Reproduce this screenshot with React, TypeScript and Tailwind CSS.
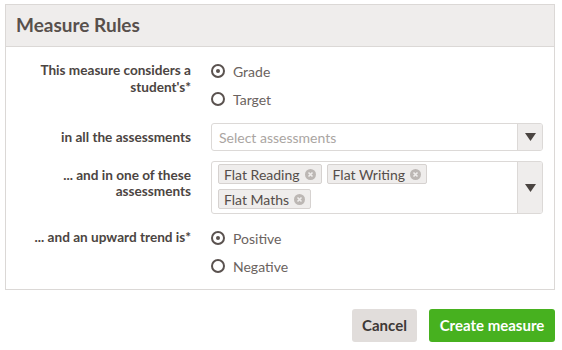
import React from "react";

const font = { fontFamily: "Lato, 'Open Sans', sans-serif" };

function Radio({ checked, label }: { checked?: boolean; label: string }) {
  return (
    <div className="flex h-[28px] items-center">
      <span className="flex h-[14px] w-[14px] items-center justify-center rounded-full border-2 border-[#5a524f] bg-white">
        {checked && <span className="h-[4px] w-[4px] rounded-full bg-[#5a524f]" />}
      </span>
      <span className="ml-[8px] text-[14px] text-[#6b6360]">{label}</span>
    </div>
  );
}

function Arrow({ h }: { h: string }) {
  return (
    <div className={`flex w-[25px] items-center justify-center border-l border-[#dcd9d7] bg-[#efedec] ${h}`}>
      <svg width="11" height="8" viewBox="0 0 11 8">
        <path d="M0 0 H11 L5.5 8 Z" fill="#4a4441" />
      </svg>
    </div>
  );
}

function Tag({ label }: { label: string }) {
  return (
    <span className="flex h-[20px] items-center rounded-[2px] border border-[#d6d2d0] bg-[#efedec] pl-[5px] pr-[5px] text-[14px] text-[#554d4a]">
      {label}
      <svg className="ml-[5px]" width="11" height="11" viewBox="0 0 11 11">
        <circle cx="5.5" cy="5.5" r="5.5" fill="#bcb7b4" />
        <path d="M3.5 3.5 L7.5 7.5 M7.5 3.5 L3.5 7.5" stroke="#efedec" strokeWidth="1.6" />
      </svg>
    </span>
  );
}

export default function App() {
  return (
    <div style={font} className="h-[350px] w-[562px] bg-white pl-[5px] pt-[4px]">
      <div className="w-[550px] border border-[#dbd8d6]">
        <div className="flex h-[42px] items-center border-b border-[#dbd8d6] bg-[#efedec] pl-[10px]">
          <span className="text-[19px] font-bold text-[#58504c]">Measure Rules</span>
        </div>
        <div className="flex flex-col gap-[10px] pb-[9px] pt-[10px] text-[13.6px]">
          <div className="flex">
            <div className="w-[185px] pt-[5px] text-right font-bold leading-[17px] text-[#4c4542]">
              This measure considers a<br />student's*
            </div>
            <div className="ml-[20px] flex flex-col">
              <Radio checked label="Grade" />
              <Radio label="Target" />
            </div>
          </div>
          <div className="flex items-center">
            <div className="w-[185px] text-right font-bold leading-[17px] text-[#4c4542]">in all the assessments</div>
            <div className="ml-[20px] mr-[11px] flex h-[28px] flex-1 overflow-hidden rounded-[3px] border border-[#dcd9d7]">
              <div className="flex flex-1 items-center pl-[7px] text-[14px] text-[#aaa5a2]">Select assessments</div>
              <Arrow h="h-full" />
            </div>
          </div>
          <div className="flex">
            <div className="w-[185px] pt-[6px] text-right font-bold leading-[16px] text-[#4c4542]">
              ... and in one of these<br />assessments
            </div>
            <div className="ml-[20px] mr-[11px] flex h-[53px] flex-1 overflow-hidden rounded-[3px] border border-[#dcd9d7]">
              <div className="flex flex-1 flex-wrap content-start gap-[5px] pl-[6px] pt-[2px]">
                <Tag label="Flat Reading" />
                <Tag label="Flat Writing" />
                <Tag label="Flat Maths" />
              </div>
              <Arrow h="h-full" />
            </div>
          </div>
          <div className="flex">
            <div className="w-[185px] pt-[5px] text-right font-bold leading-[17px] text-[#4c4542]">
              ... and an upward trend is*
            </div>
            <div className="ml-[20px] flex flex-col">
              <Radio checked label="Positive" />
              <Radio label="Negative" />
            </div>
          </div>
        </div>
      </div>
      <div className="mt-[19px] flex w-[550px] justify-end gap-[12px]">
        <button className="h-[33px] w-[65px] rounded-[3px] bg-[#e1dddb] text-[15px] font-bold text-[#3e3836]">Cancel</button>
        <button className="h-[33px] w-[126px] rounded-[3px] bg-[#47b11f] text-[15px] font-bold text-white">Create measure</button>
      </div>
    </div>
  );
}
